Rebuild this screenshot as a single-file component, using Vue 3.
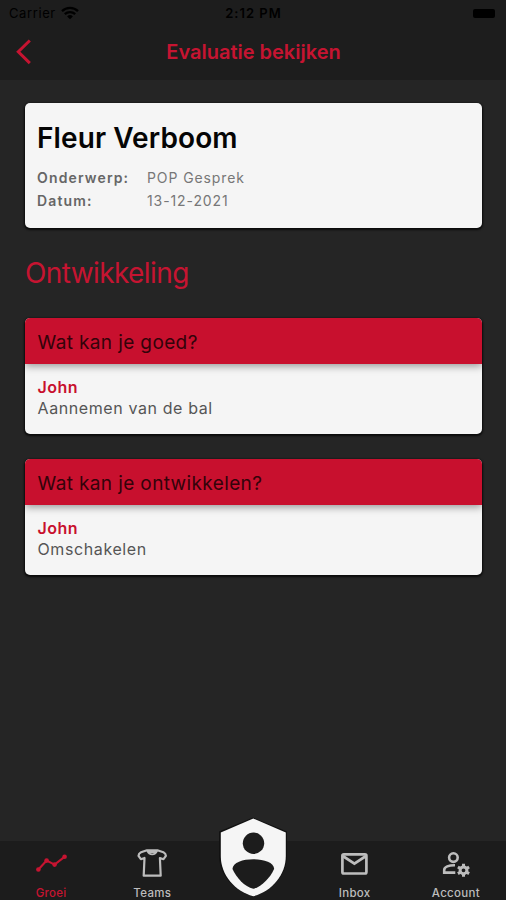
<script setup>
const evaluation = {
  name: 'Fleur Verboom',
  details: [
    { label: 'Onderwerp:', value: 'POP Gesprek' },
    { label: 'Datum:', value: '13-12-2021' },
  ],
}
const questions = [
  { title: 'Wat kan je goed?', author: 'John', answer: 'Aannemen van de bal' },
  { title: 'Wat kan je ontwikkelen?', author: 'John', answer: 'Omschakelen' },
]
</script>

<template>
  <div class="screen">
    <header class="top">
      <div class="status">
        <div class="carrier">
          <span>Carrier</span>
          <svg width="18" height="14" viewBox="0 0 18 14">
            <path d="M1 5.2a11.5 11.5 0 0 1 16 0M3.8 8.2a7.5 7.5 0 0 1 10.4 0" fill="none" stroke="#000" stroke-width="2.3" />
            <path d="M9 13.2 6.1 10.5a4.2 4.2 0 0 1 5.8 0z" fill="#000" />
          </svg>
        </div>
        <span class="time">2:12 PM</span>
        <div class="battery-box"><i class="battery"></i></div>
      </div>
      <div class="nav">
        <svg class="back" width="16" height="26" viewBox="0 0 16 26">
          <path d="M13.8 1.5 2.3 12.8l11.500 11.300" fill="none" stroke="#c61431" stroke-width="3" />
        </svg>
        <h1>Evaluatie bekijken</h1>
      </div>
    </header>

    <main>
      <section class="card profile">
        <h2>{{ evaluation.name }}</h2>
        <dl>
          <template v-for="d in evaluation.details" :key="d.label">
            <dt>{{ d.label }}</dt>
            <dd>{{ d.value }}</dd>
          </template>
        </dl>
      </section>

      <h3 class="section-title">Ontwikkeling</h3>

      <section v-for="q in questions" :key="q.title" class="card question">
        <h4>{{ q.title }}</h4>
        <div class="answer">
          <strong>{{ q.author }}</strong>
          <p>{{ q.answer }}</p>
        </div>
      </section>
    </main>

    <nav class="tabs">
      <a class="tab active">
        <svg width="32" height="32" viewBox="0 0 32 32">
          <path d="M3.4 22.5 11.6 13.6l8 4L29.8 9.7" fill="none" stroke="currentColor" stroke-width="2.1" />
          <g fill="currentColor">
            <circle cx="3.4" cy="22.5" r="2.3" /><circle cx="11.6" cy="13.6" r="2.3" />
            <circle cx="19.6" cy="17.6" r="2.3" /><circle cx="29.6" cy="9.8" r="2.3" />
          </g>
        </svg>
        <span>Groei</span>
      </a>
      <a class="tab">
        <svg width="32" height="32" viewBox="0 0 32 32">
          <path d="M11 3.3 5 5.3Q2.600 6.500 2.500 8.900L4.900 12.200 8.500 11 7.700 28.700h17L23.900 11l3.600 1.200 2.400-3.300q-.1-2.400-2.500-3.600l-6-2z" fill="none" stroke="currentColor" stroke-width="2.200" stroke-linejoin="round" />
          <path d="M11.300 3.600q1.500 3.800 4.900 3.800t4.900-3.800M12.500 5h7.400" fill="none" stroke="currentColor" stroke-width="1.800" />
        </svg>
        <span>Teams</span>
      </a>
      <a class="tab center">
        <svg class="shield" width="70" height="82" viewBox="0 0 70 82">
          <path d="M35 1.5 69 15.500V39C69 59 55 74 35 80.500 15 74 1 59 1 39V15.500z" fill="#111" />
          <path d="M35.300 2.500 67.800 16.500V40C67.800 59 54 75 35.300 80.300 16.500 75 2.800 59 2.800 40V16.500z" fill="#f5f5f5" />
          <circle cx="35.500" cy="27.300" r="10.700" fill="#1c1c1c" />
          <path d="M14.500 53C14.300 46.500 25 43.200 35.300 43.200S56.300 46.500 56.100 53C52 62 44 70.500 35.300 72.800 26.500 70.500 18.500 62 14.500 53z" fill="#1c1c1c" />
        </svg>
      </a>
      <a class="tab">
        <svg width="32" height="32" viewBox="0 0 32 32">
          <rect x="4.400" y="7.300" width="24" height="19.200" rx="1.500" fill="none" stroke="currentColor" stroke-width="2.700" />
          <path d="m4.800 9 11.600 7.600 11.600-7.600" fill="none" stroke="currentColor" stroke-width="2.700" />
        </svg>
        <span>Inbox</span>
      </a>
      <a class="tab">
        <svg width="32" height="32" viewBox="0 0 32 32">
          <g fill="none" stroke="currentColor" stroke-width="2.600">
            <circle cx="14.400" cy="10.600" r="4.300" />
            <path d="M16.300 25.600H5.200v-2.600c0-3.200 4.600-4.900 10.800-4.800" />
            <circle cx="24.500" cy="23.300" r="3.400" stroke-width="3" />
            <path d="M24.500 20v-3.200M24.500 29.800v-3.200M27.400 21.600l2.700-1.600M18.900 26.600l2.700-1.600M27.400 25l2.700 1.600M18.900 20l2.700 1.600" stroke-width="3" />
          </g>
        </svg>
        <span>Account</span>
      </a>
    </nav>
  </div>
</template>

<style>
body { background: #252525; }
</style>

<style scoped>
* { box-sizing: border-box; margin: 0; padding: 0; }
.screen {
  display: flex;
  flex-direction: column;
  width: 506px;
  height: 900px;
  overflow: hidden;
  background: #252525;
  font-family: Inter, "Liberation Sans", sans-serif;
  white-space: nowrap;
}
.top { height: 80px; background: #1d1d1d; flex: none; }
.status {
  display: grid;
  grid-template-columns: 1fr auto 1fr;
  align-items: center;
  height: 26px;
  padding: 0 9px;
  font-size: 13px;
  color: #000;
}
.carrier { display: flex; align-items: center; gap: 5px; letter-spacing: .6px; }
.time { padding-left: 1px; font-weight: 600; letter-spacing: 1px; }
.battery-box { display: flex; justify-content: flex-end; }
.battery { width: 22px; height: 9px; margin-right: 2px; border-radius: 2px; background: #000; }
.nav {
  display: grid;
  grid-template-columns: 40px 1fr 40px;
  align-items: center;
  height: 52px;
}
.back { margin-left: 16px; }
h1 { padding-left: 1px; text-align: center; font-size: 20px; font-weight: 600; color: #c61431; }
main { flex: 1; padding: 23px 24px 0 25px; }
.card {
  border-radius: 5px;
  background: #f5f5f5;
  box-shadow: 0 1px 2px 1px #0b0b0b;
  overflow: hidden;
}
.profile { height: 125px; padding: 17px 12px; }
h2 { font-size: 28px; line-height: 36px; font-weight: 600; letter-spacing: .1px; color: #050505; }
dl {
  display: grid;
  grid-template-columns: 110px 1fr;
  margin-top: 10px;
  font-size: 14px;
  line-height: 23px;
  letter-spacing: .9px;
}
dt { font-weight: 600; color: #666; letter-spacing: 1.15px; }
dd { color: #777; }
.section-title {
  margin: 26px 0;
  font-size: 28px;
  line-height: 38px;
  font-weight: 400;
  letter-spacing: -.6px;
  color: #c61431;
}
.question { height: 116px; margin-bottom: 25px; }
h4 {
  height: 46px;
  padding-left: 12.5px;
  background: #c8102e;
  box-shadow: 0 2px 8px rgba(0, 0, 0, .4);
  color: #33030a;
  font-size: 19px;
  line-height: 49px;
  font-weight: 400;
  letter-spacing: .38px;
}
.answer { padding: 13px 12.5px; font-size: 16px; line-height: 21px; }
strong { display: block; font-weight: 600; letter-spacing: .5px; color: #c8102e; }
p { color: #555; letter-spacing: .6px; }
.tabs {
  display: grid;
  grid-template-columns: repeat(5, 1fr);
  flex: none;
  height: 59px;
  background: #1c1c1c;
}
.tab {
  display: flex;
  flex-direction: column;
  align-items: center;
  padding-top: 6px;
  color: #bdbdbd;
  font-size: 11.5px;
  font-weight: 500;
  line-height: 14px;
  letter-spacing: .3px;
}
.tab span { margin-top: 7px; padding-left: 1px; }
.active { color: #c61431; }
.center { padding: 0; }
.shield { margin-top: -25px; flex: none; }
</style>
